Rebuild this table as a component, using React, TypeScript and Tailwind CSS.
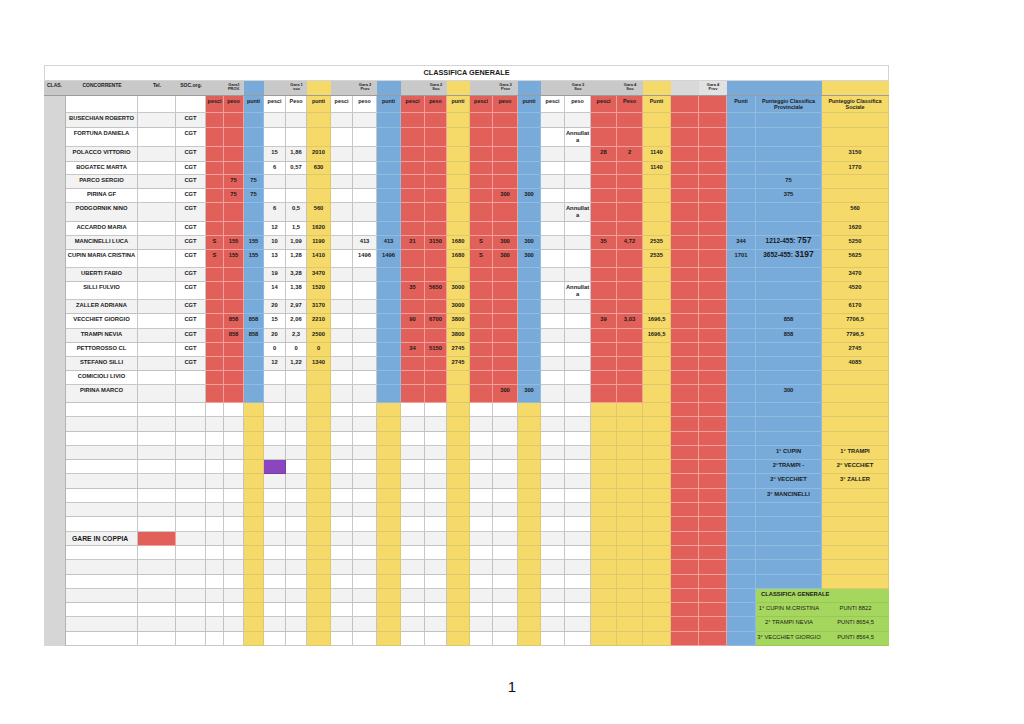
import React from "react";

const GRID =
  "grid grid-cols-[22px_72px_38px_30px_18px_20px_20px_22px_21px_24px_22px_24px_24px_24px_22px_23px_23px_25px_23px_24px_26px_26px_26px_28px_28px_28px_29px_66px_67px]";

const BG: Record<string, string> = {
  R: "bg-[#e2605a]",
  B: "bg-[#78abda]",
  Y: "bg-[#f5da6a]",
  W: "bg-white",
  L: "bg-[#f2f2f2]",
  K: "bg-[#d6d6d6]",
  H: "bg-[#c9c9c9]",
  h: "bg-[#d9d9d9]",
  j: "bg-[#e2e2e2]",
  G: "bg-[#a5d75e]",
  P: "bg-[#8b45bf]",
};

const HEAD_PAT = "HHHHHHBHHYHHBHHYHHBHHHHYhjBBY";
const SUB_PAT = "KWWWRRBWWYWWBRRYRRBWWRRYRRBBY";
const DATA_PAT = "KaaaRRBaaYaaBRRYRRBaaRRYRRBBY";
const EMPTY_PAT = "KaaaaaYaaYaaYaaYaaYaaYYYRRBBY";

type Vals = Record<number, React.ReactNode>;

const ANN = (
  <span>
    Annullat
    <br />a
  </span>
);

const big = (a: string, b: string) => (
  <span className="flex items-baseline gap-[2px] -mt-[1px]">
    <span className="text-[6.5px]">{a}</span>
    <span className="text-[8.5px]">{b}</span>
  </span>
);

const two = (a: string, b: string) => (
  <span>
    {a}
    <br />
    {b}
  </span>
);

const data: { h: string; v: Vals }[] = [
  { h: "h-[15px]", v: { 1: "BUSECHIAN ROBERTO", 3: "CGT" } },
  { h: "h-[19px]", v: { 1: "FORTUNA DANIELA", 3: "CGT", 20: ANN } },
  {
    h: "h-[15px]",
    v: { 1: "POLACCO VITTORIO", 3: "CGT", 7: "15", 8: "1,86", 9: "2010", 21: "28", 22: "2", 23: "1140", 28: "3150" },
  },
  { h: "h-[13px]", v: { 1: "BOGATEC MARTA", 3: "CGT", 7: "6", 8: "0,57", 9: "630", 23: "1140", 28: "1770" } },
  { h: "h-[13.5px]", v: { 1: "PARCO SERGIO", 3: "CGT", 5: "75", 6: "75", 27: "75" } },
  { h: "h-[14.5px]", v: { 1: "PIRINA GF", 3: "CGT", 5: "75", 6: "75", 17: "300", 18: "300", 27: "375" } },
  { h: "h-[18.5px]", v: { 1: "PODGORNIK NINO", 3: "CGT", 7: "6", 8: "0,5", 9: "560", 20: ANN, 28: "560" } },
  { h: "h-[14.5px]", v: { 1: "ACCARDO MARIA", 3: "CGT", 7: "12", 8: "1,5", 9: "1620", 28: "1620" } },
  {
    h: "h-[14px]",
    v: {
      1: "MANCINELLI LUCA",
      3: "CGT",
      4: "S",
      5: "155",
      6: "155",
      7: "10",
      8: "1,09",
      9: "1190",
      11: "413",
      12: "413",
      13: "21",
      14: "3150",
      15: "1680",
      16: "S",
      17: "300",
      18: "300",
      21: "35",
      22: "4,72",
      23: "2535",
      26: "344",
      27: big("1212-455:", "757"),
      28: "5250",
    },
  },
  {
    h: "h-[18px]",
    v: {
      1: "CUPIN MARIA CRISTINA",
      3: "CGT",
      4: "S",
      5: "155",
      6: "155",
      7: "13",
      8: "1,28",
      9: "1410",
      11: "1496",
      12: "1496",
      15: "1680",
      16: "S",
      17: "300",
      18: "300",
      23: "2535",
      26: "1701",
      27: big("3652-455:", "3197"),
      28: "5625",
    },
  },
  { h: "h-[14px]", v: { 1: "UBERTI FABIO", 3: "CGT", 7: "19", 8: "3,28", 9: "3470", 28: "3470" } },
  {
    h: "h-[18px]",
    v: { 1: "SILLI FULVIO", 3: "CGT", 7: "14", 8: "1,38", 9: "1520", 13: "35", 14: "5650", 15: "3000", 20: ANN, 28: "4520" },
  },
  { h: "h-[14px]", v: { 1: "ZALLER ADRIANA", 3: "CGT", 7: "20", 8: "2,97", 9: "3170", 15: "3000", 28: "6170" } },
  {
    h: "h-[14.5px]",
    v: {
      1: "VECCHIET GIORGIO",
      3: "CGT",
      5: "858",
      6: "858",
      7: "15",
      8: "2,06",
      9: "2210",
      13: "90",
      14: "6700",
      15: "3800",
      21: "39",
      22: "3,03",
      23: "1696,5",
      27: "858",
      28: "7706,5",
    },
  },
  {
    h: "h-[14.5px]",
    v: { 1: "TRAMPI NEVIA", 3: "CGT", 5: "858", 6: "858", 7: "20", 8: "2,3", 9: "2500", 15: "3800", 23: "1696,5", 27: "858", 28: "7796,5" },
  },
  {
    h: "h-[14px]",
    v: { 1: "PETTOROSSO CL", 3: "CGT", 7: "0", 8: "0", 9: "0", 13: "34", 14: "5150", 15: "2745", 28: "2745" },
  },
  { h: "h-[14px]", v: { 1: "STEFANO SILLI", 3: "CGT", 7: "12", 8: "1,22", 9: "1340", 15: "2745", 28: "4085" } },
  { h: "h-[14px]", v: { 1: "COMICIOLI LIVIO" } },
  { h: "h-[18px]", v: { 1: "PIRINA MARCO", 17: "300", 18: "300", 27: "300" } },
];

const greenSmall = "text-[4.8px] font-normal pt-[1px]";

const empties: { v: Vals; o?: Record<number, string>; cls?: Record<number, string> }[] = [
  { v: {} },
  { v: {} },
  { v: {} },
  { v: { 27: "1° CUPIN", 28: "1° TRAMPI" } },
  { v: { 27: "2°TRAMPI -", 28: "2° VECCHIET" }, o: { 7: "P" } },
  { v: { 27: "2° VECCHIET", 28: "3° ZALLER" } },
  { v: { 27: "3° MANCINELLI" } },
  { v: {} },
  { v: {} },
  {
    v: { 1: "GARE IN COPPIA" },
    o: { 2: "R" },
    cls: { 1: "justify-start pl-[6px] pt-[3.5px] text-[6.8px]" },
  },
  { v: {} },
  { v: {} },
  { v: {} },
  {
    v: { 27: "CLASSIFICA GENERALE" },
    o: { 27: "G", 28: "G" },
    cls: { 27: "justify-start pl-[5px] pt-[1px] text-[4.7px] relative z-10" },
  },
  {
    v: { 27: "1° CUPIN M.CRISTINA", 28: "PUNTI  8822" },
    o: { 27: "G", 28: "G" },
    cls: { 27: greenSmall, 28: greenSmall },
  },
  {
    v: { 27: "2° TRAMPI NEVIA", 28: "PUNTI  8654,5" },
    o: { 27: "G", 28: "G" },
    cls: { 27: greenSmall, 28: greenSmall },
  },
  {
    v: { 27: "3° VECCHIET GIORGIO", 28: "PUNTI  8564,5" },
    o: { 27: "G", 28: "G" },
    cls: { 27: greenSmall, 28: greenSmall },
  },
];

const headVals: Vals = {
  0: "CLAS.",
  1: "CONCORRENTE",
  2: "Tel.",
  3: "SOC.org.",
  5: two("Gara1", "PROV."),
  8: two("Gara 1", "soc"),
  11: two("Gara 2", "Prov"),
  14: two("Gara 2", "Soc"),
  17: two("Gara 3", "Prov"),
  20: two("Gara 3", "Soc"),
  22: two("Gara 4", "Soc"),
  25: two("Gara 4", "Prov"),
};

const subVals: Vals = {
  4: "pesci",
  5: "peso",
  6: "punti",
  7: "pesci",
  8: "Peso",
  9: "punti",
  10: "pesci",
  11: "peso",
  12: "punti",
  13: "pesci",
  14: "peso",
  15: "punti",
  16: "pesci",
  17: "peso",
  18: "punti",
  19: "pesci",
  20: "peso",
  21: "pesci",
  22: "Peso",
  23: "Punti",
  26: "Punti",
  27: two("Punteggio Classifica", "Provinciale"),
  28: two("Punteggio Classifica", "Sociale"),
};

const CELL_BASE =
  "flex justify-center items-start text-center whitespace-nowrap font-bold text-[#1a1a1a] overflow-visible";

function borderFor(code: string) {
  if (code === "R") return "border-r border-b border-[#f2a09c]";
  if (code === "B") return "border-r border-b border-[#90bbe2]";
  if (code === "Y") return "border-r border-b border-[#ddc86c]";
  if (code === "G") return "border-b border-[#98c855]";
  if (code === "P") return "border-r border-b border-[#7a3aa8]";
  return "border-r border-b border-[#9a9a9a8c]";
}

function Row({
  pat,
  alt,
  h,
  vals,
  kind,
  over,
  cls,
}: {
  pat: string;
  alt: boolean;
  h: string;
  vals: Vals;
  kind: "head" | "sub" | "body";
  over?: Record<number, string>;
  cls?: Record<number, string>;
}) {
  return (
    <div className={`${GRID} ${h}`}>
      {pat.split("").map((c, i) => {
        let code = over && over[i] ? over[i] : c;
        if (code === "a") code = alt ? "L" : "W";
        let border = "";
        if (kind === "head") {
          border = "border-b border-[#9c9c9c]";
        } else if (code === "K") {
          border = "border-r border-[#b3b3b3]";
        } else {
          border = borderFor(code);
        }
        let txt = "";
        if (kind === "head") {
          txt =
            i <= 3
              ? "text-[5px] leading-[6px] pt-[1px] text-[#222]"
              : "text-[4px] leading-[4.5px] pt-[1.5px] text-[#222]";
          if (i === 0) txt += " justify-start pl-[3px]";
        } else if (kind === "sub") {
          txt = "text-[5.4px] leading-[6px] pt-[2px]";
        } else {
          txt = "text-[5.8px] leading-[7px] pt-[2px]";
        }
        const extra = cls && cls[i] ? cls[i] : "";
        return (
          <div key={i} className={`${BG[code]} ${border} ${CELL_BASE} ${txt} ${extra}`}>
            {vals[i]}
          </div>
        );
      })}
    </div>
  );
}

export default function App() {
  return (
    <div className="w-[1024px] h-[724px] bg-white font-['Liberation_Sans',Arial,sans-serif] overflow-hidden">
      <div className="pt-[65px] pl-[44px]">
        <div className="w-[845px]">
          <div className="h-[16px] border border-[#d4d4d4] bg-white flex items-center justify-center text-[7.3px] font-bold text-[#1a1a1a]">
            CLASSIFICA GENERALE
          </div>
          <Row pat={HEAD_PAT} alt={false} h="h-[15px]" vals={headVals} kind="head" />
          <Row pat={SUB_PAT} alt={false} h="h-[17px]" vals={subVals} kind="sub" />
          {data.map((r, i) => (
            <Row key={"d" + i} pat={DATA_PAT} alt={i % 2 === 0} h={r.h} vals={r.v} kind="body" />
          ))}
          {empties.map((r, i) => (
            <Row
              key={"e" + i}
              pat={EMPTY_PAT}
              alt={(i + 19) % 2 === 0}
              h="h-[14.3px]"
              vals={r.v}
              kind="body"
              over={r.o}
              cls={r.cls}
            />
          ))}
        </div>
      </div>
      <div className="mt-[33px] text-center text-[15px] leading-[15px] text-[#111]">1</div>
    </div>
  );
}
